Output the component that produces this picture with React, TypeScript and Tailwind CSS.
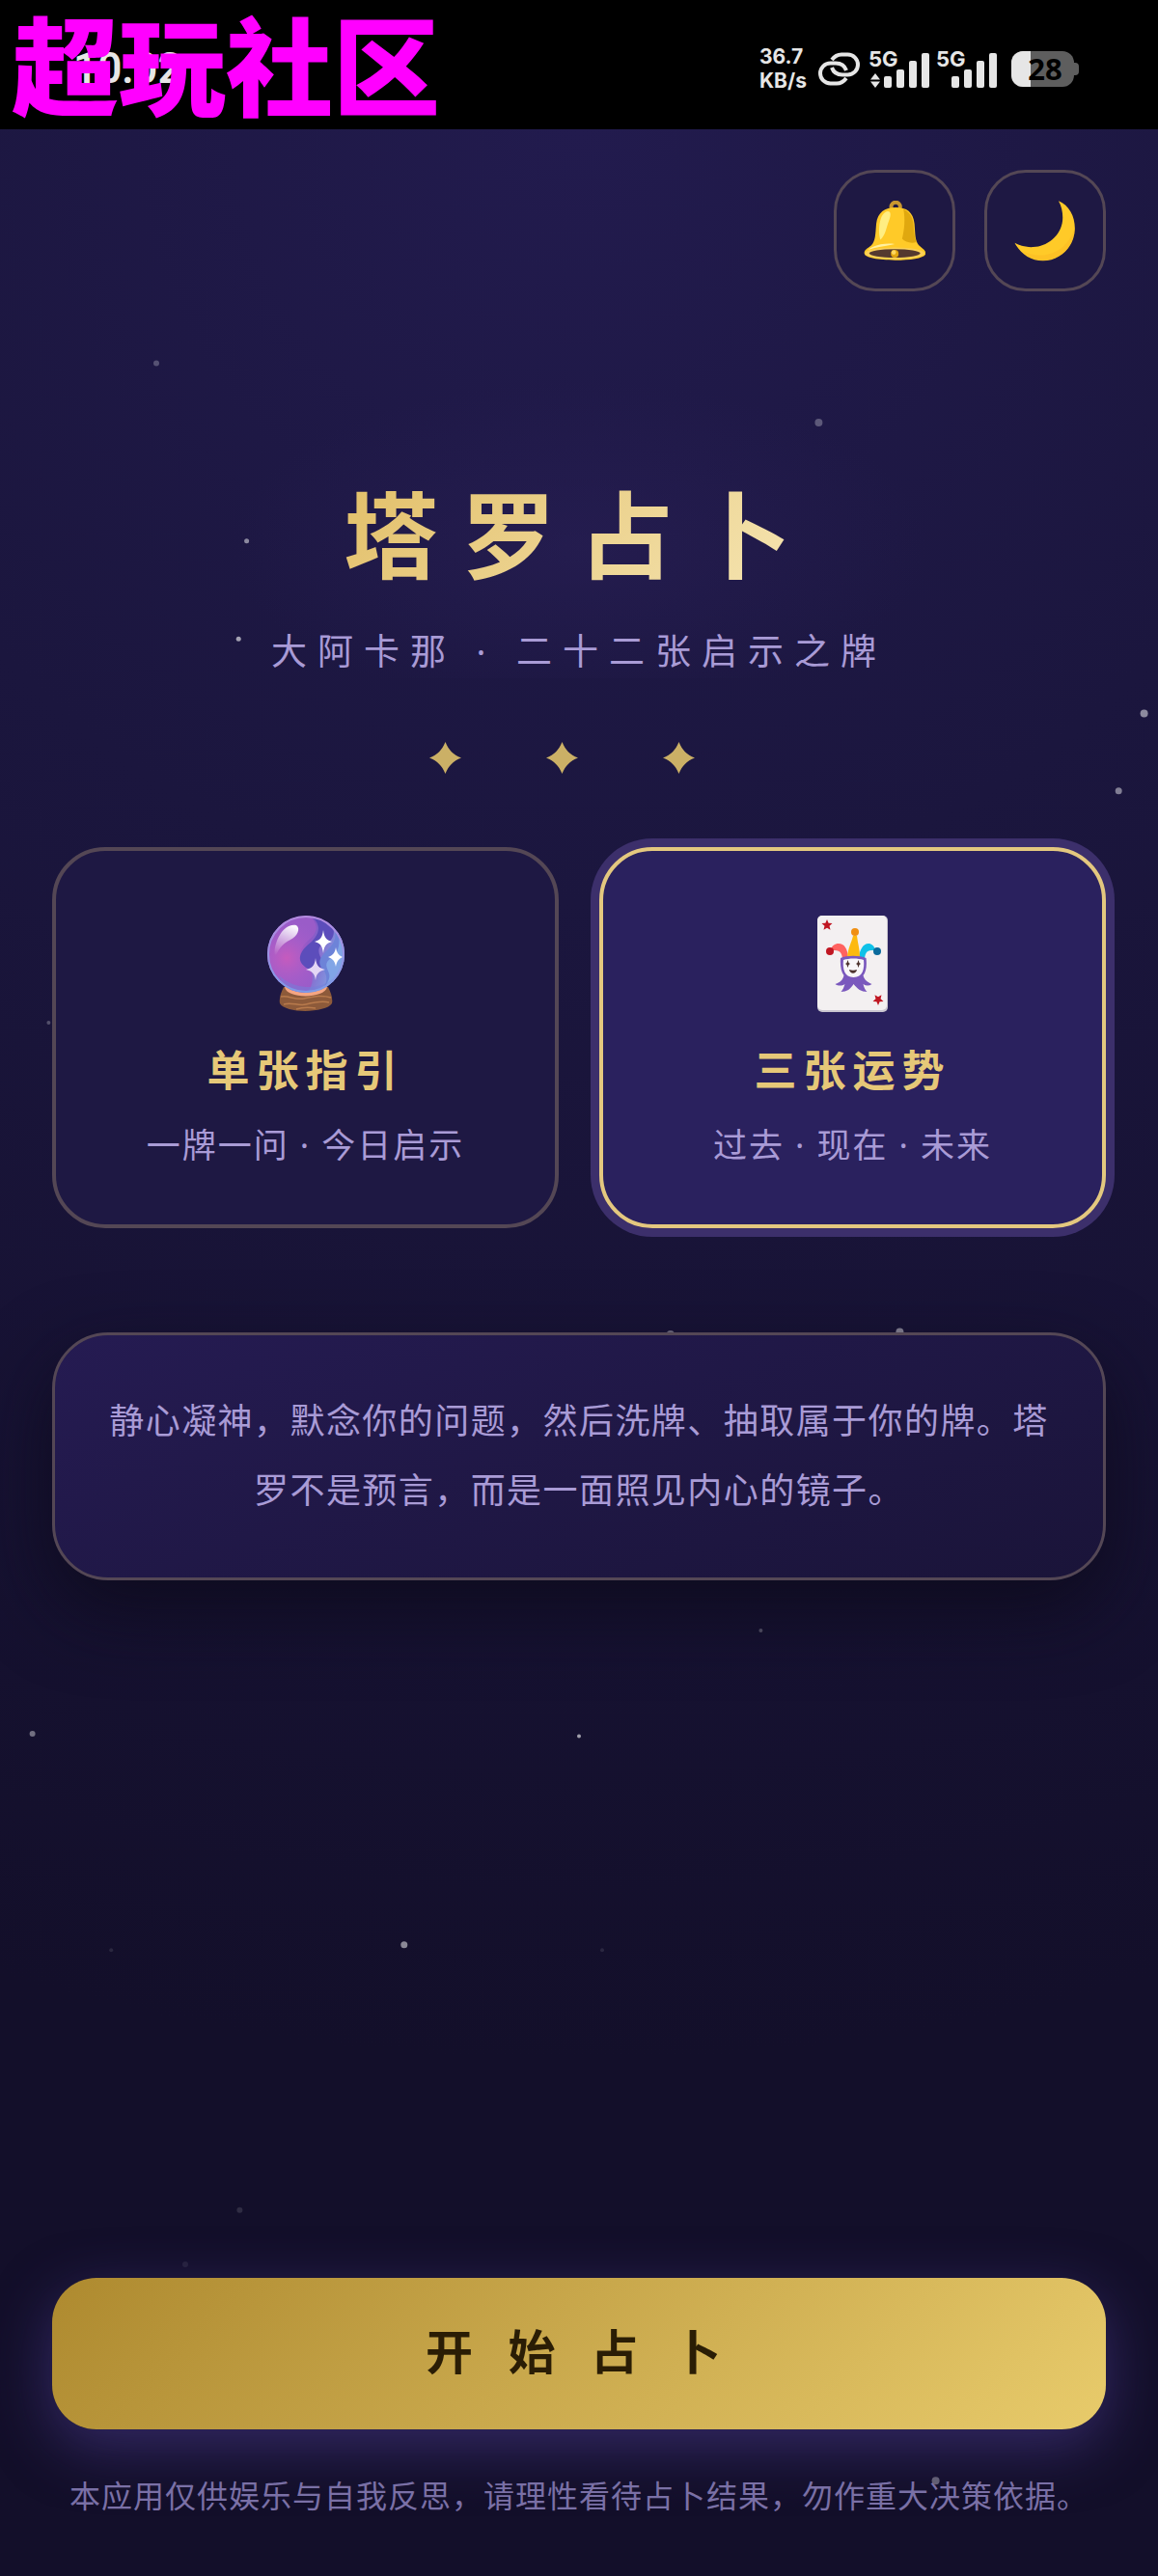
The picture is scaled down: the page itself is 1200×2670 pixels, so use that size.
import { useState } from "react";
import type { ReactNode } from "react";
import clsx from "clsx";

// cx / cy are percentages of the page, r is in pixels
const stars = [
  { cx: 13.5, cy: 14.1, r: 3, opacity: 0.25 },
  { cx: 70.7, cy: 16.4, r: 4, opacity: 0.28 },
  { cx: 21.3, cy: 21, r: 2.5, opacity: 0.5 },
  { cx: 20.6, cy: 24.8, r: 2.5, opacity: 0.6 },
  { cx: 98.8, cy: 27.7, r: 4, opacity: 0.5 },
  { cx: 96.6, cy: 30.7, r: 3.5, opacity: 0.45 },
  { cx: 4.2, cy: 39.7, r: 2, opacity: 0.25 },
  { cx: 57.9, cy: 51.8, r: 4, opacity: 0.4 },
  { cx: 77.7, cy: 51.7, r: 4, opacity: 0.5 },
  { cx: 65.7, cy: 63.3, r: 2, opacity: 0.3 },
  { cx: 2.8, cy: 67.3, r: 3, opacity: 0.4 },
  { cx: 50, cy: 67.4, r: 2, opacity: 0.6 },
  { cx: 34.9, cy: 75.5, r: 3.5, opacity: 0.5 },
  { cx: 9.6, cy: 75.7, r: 2, opacity: 0.1 },
  { cx: 52, cy: 75.7, r: 2, opacity: 0.1 },
  { cx: 20.7, cy: 85.8, r: 3, opacity: 0.12 },
  { cx: 16, cy: 87.9, r: 3, opacity: 0.08 },
  { cx: 80.8, cy: 96.3, r: 4, opacity: 0.35 },
];

const StarField = () => (
  <svg className="absolute inset-0 w-full h-full" aria-hidden="true">
    {stars.map((star, i) => (
      <circle
        key={i}
        cx={`${star.cx}%`}
        cy={`${star.cy}%`}
        r={star.r}
        fill="#fff"
        opacity={star.opacity}
      />
    ))}
  </svg>
);

const LinkIcon = () => (
  <svg width="45" height="35" viewBox="0 0 45 35" fill="none" stroke="#e6e6e6" strokeWidth="4">
    <path d="M15 8C18 4 21 2.500 25 2.500h6.500a10.500 10.500 0 0 1 0 21H26c-6 0-9.500-3-11-7.500" />
    <path d="M30 27c-3 4-6 5.500-10 5.500h-6.500a10.500 10.500 0 0 1 0-21H19c6 0 9.500 3 11 7.500" />
  </svg>
);

const Signal = ({ arrows = false }: { arrows?: boolean }) => (
  <div className="flex flex-col w-16 h-10 relative">
    <span className="text-[22px] leading-5 font-bold">5G</span>
    <svg className="absolute inset-0" width="64" height="40" viewBox="0 0 64 40" fill="#e6e6e6">
      {arrows && <path d="M2 31.500 7 25l5 6.500zM2 33.500 7 40l5-6.500z" />}
      <rect x="16" y="28" width="8" height="12" rx="2" />
      <rect x="29" y="21" width="8" height="19" rx="2" />
      <rect x="42" y="12" width="8" height="28" rx="2" />
      <rect x="55" y="4" width="8" height="36" rx="2" />
    </svg>
  </div>
);

const Battery = () => (
  <div className="relative w-[70px] h-[37px]">
    <svg width="70" height="37" viewBox="0 0 70 37">
      <defs>
        <clipPath id="cell">
          <rect width="65" height="37" rx="12" />
        </clipPath>
      </defs>
      <path d="M64 12h2a4 4 0 0 1 4 4v5a4 4 0 0 1-4 4h-2z" fill="#5e5e5e" />
      <g clipPath="url(#cell)">
        <rect width="65" height="37" fill="#5e5e5e" />
        <rect width="20" height="37" fill="#e6e6e6" />
      </g>
    </svg>
    <span className="absolute inset-0 flex items-center justify-center text-black text-[31px] leading-none font-bold font-['Open_Sans',sans-serif]">
      28
    </span>
  </div>
);

const StatusBar = () => (
  <div className="relative h-[134px] bg-black text-[#e6e6e6] flex items-center justify-between pl-[76px] pr-[82px] pt-2 font-['Inter',sans-serif]">
    <span className="text-[44px] leading-none font-semibold font-['Roboto',sans-serif]">10:02</span>
    <div className="flex items-center">
      <div className="text-[21px] leading-[25px] font-bold mr-3 w-12">
        <div>36.7</div>
        <div>KB/s</div>
      </div>
      <LinkIcon />
      <div className="flex gap-[6px] ml-2 mr-[14px]">
        <Signal arrows />
        <Signal />
      </div>
      <Battery />
    </div>
    <span className="absolute left-3 top-0 text-[111px] leading-[138px] font-black text-[#ff00ff] whitespace-nowrap font-['Noto_Sans','Noto_Sans_CJK_SC',sans-serif]">
      超玩社区
    </span>
  </div>
);

const BellIcon = () => (
  <svg width="64" height="62" viewBox="164 179 191 185">
    <circle cx="263" cy="198" r="14" fill="none" stroke="#c9972f" strokeWidth="12" />
    <path
      d="M263 200c-34 0-56 16-60 50-3 34-2 54-16 68-11 9-22 14-21 24 1 14 44 21 95 21s94-7 95-21c0-11-14-17-22-26-12-15-10-33-13-66-4-36-24-50-58-50z"
      fill="#ffca28"
    />
    <path d="M287 205c25 12 30 30 32 60 1 18 3 28 8 42-16 6-34 0-44-10 7-30 10-60 4-92z" fill="#e0a80f" />
    <path d="M238 212c12 0 10 14 4 30-8 20-10 44-26 58-8-20-6-84 22-88z" fill="#ffee82" />
    <path d="M178 331c20-18 60-22 82-18-20 6-55 8-82 18z" fill="#fff0a0" />
    <ellipse cx="260" cy="342" rx="92" ry="18" fill="#fbd057" />
    <ellipse cx="260" cy="342" rx="79" ry="13" fill="#55392f" />
    <circle cx="260" cy="343" r="12" fill="#e2a610" />
    <circle cx="257" cy="339" r="7" fill="#ffd75e" />
  </svg>
);

const MoonIcon = () => (
  <svg width="64" height="63" viewBox="632 178 192 190">
    <path
      d="M770 179c34 14 52 50 51 88-2 56-46 99-100 99-38 0-70-22-88-56 20 10 40 14 58 13 50-2 92-42 92-92 0-18-4-36-13-52z"
      fill="#ffca28"
    />
    <path
      d="M821 262c0 60-46 102-98 103-26 0-50-12-66-30 60 32 140 8 164-73z"
      fill="#f9b420"
      opacity="0.4"
    />
  </svg>
);

const CrystalBall = () => (
  <svg width="80" height="100" viewBox="0 0 80 100">
    <defs>
      <linearGradient id="glass" x1="0" y1="0.3" x2="1" y2="0.6">
        <stop offset="0" stopColor="#a066cc" />
        <stop offset="0.5" stopColor="#8656c4" />
        <stop offset="1" stopColor="#7fa9e8" />
      </linearGradient>
      <radialGradient id="pink" cx="0.25" cy="0.55" r="0.5">
        <stop offset="0" stopColor="#c65bbd" />
        <stop offset="1" stopColor="#a35fd0" stopOpacity="0" />
      </radialGradient>
      <linearGradient id="shine" x1="0.6" y1="0" x2="0.3" y2="1">
        <stop offset="0" stopColor="#fff" stopOpacity="0.95" />
        <stop offset="1" stopColor="#fff" stopOpacity="0" />
      </linearGradient>
      <linearGradient id="rim" x1="0" y1="0" x2="0" y2="1">
        <stop offset="0" stopColor="#b48be0" />
        <stop offset="1" stopColor="#7d9be6" />
      </linearGradient>
      <clipPath id="ball">
        <circle cx="40" cy="40" r="40" />
      </clipPath>
    </defs>
    <path d="M17 74h46c3 6 5 12 4 17-6 10-48 11-54 0-1-5 1-11 4-17z" fill="#8d5a3a" />
    <path
      d="M14 84c8-2 14 4 24 2s18-4 28-1M17 92c8-3 15 2 23 0s16-4 24-2M30 97c6-2 14-2 20-1"
      fill="none"
      stroke="#b87a4c"
      strokeWidth="1.5"
    />
    <path d="M18 74h44c-2 12-42 13-44 0z" fill="#f5a682" />
    <g clipPath="url(#ball)">
      <circle cx="40" cy="40" r="40" fill="url(#glass)" />
      <path d="M44 0c12 12 6 20-3 27-8 8-10 16-2 24 10 6 10 20 2 29h-20C-8 68-8 20 18 6z" fill="#9a5cc8" />
      <circle cx="40" cy="40" r="40" fill="url(#pink)" />
      <path d="M46 1c12 10 6 20 0 26-12 9-18 20-4 28 10 5 18-2 14-10s-4-14 4-16 12-12 6-22z" fill="#5c4dbb" />
      <path d="M66 8c8 10 4 20-2 26-8 8-14 14-6 22 6 8 4 18-6 24h28V10z" fill="#6d83d8" />
      <path d="M74 20c2 12-2 20-8 24-8 6-4 10-2 16s-4 14-10 20l26-8V20z" fill="#86aeea" opacity="0.8" />
      <path d="M12 62c14 14 44 18 60 0l-10 18H20z" fill="#7280dc" opacity="0.5" />
    </g>
    <circle cx="40" cy="40" r="39" fill="none" stroke="url(#rim)" strokeWidth="2" />
    <path d="M30 10c5 3 1 12-6 15-9 4-14 12-16 19-3-14 8-37 22-34z" fill="url(#shine)" />
    <path d="M58 15c1 8 3 10 9 12-6 2-8 4-9 12-1-8-3-10-9-12 6-2 8-4 9-12z" fill="#fff" />
    <path d="M71 33c1 6 3 8 7 10-4 2-6 4-7 10-1-6-3-8-8-10 5-2 7-4 8-10z" fill="#fff" />
    <path d="M50 44c1 8 3 10 10 12-7 2-9 4-10 11-1-7-3-9-10-11 7-2 9-4 10-12z" fill="#e4d6f5" />
  </svg>
);

const JokerCard = () => (
  <svg width="73" height="100" viewBox="0 0 73 100">
    <rect width="73" height="100" rx="5" fill="#c9c5cf" />
    <rect width="72" height="98" rx="5" fill="#f3f0f1" />
    <path
      d="m10 4 1.600 3.700 3.900.3-3 2.700 1 4.100L10 12.700l-3.500 2.100 1-4.100-3-2.700 3.900-.3z"
      fill="#c01622"
    />
    <path
      d="m63 93-1.600-3.700-3.900-.3 3-2.700-1-4.100 3.500 2.100 3.500-2.100-1 4.100 3 2.700-3.900.3z"
      fill="#c01622"
    />
    <path d="M26 46c0-6-2-10-8-10h-4c1-5 4-7 8-7 6 0 9 5 10 14z" fill="#ff6260" />
    <path d="M49 46c0-6 2-10 7-10h4c-1-5-4-7-7-7-6 0-9 7-10 14z" fill="#0fc1e8" />
    <path d="M31 43c1-10 4-14 6-22h4c1 8 3 14 3 22z" fill="#fdb90f" />
    <circle cx="39" cy="17" r="4" fill="#f08f13" />
    <circle cx="13" cy="37" r="4" fill="#c01622" />
    <circle cx="62" cy="37" r="4" fill="#0b6a9c" />
    <path
      d="M24 44c6-3 20-3 26.500 0 1 8 0 14-3 18 1 5 5 7 9 9-3 2-6 2-9 0 1 4 2 6 4 8-6 0-10-3-14-8-3 5-7 8-13 8 2-2 3-5 4-8-3 2-7 2-10 0 5-2 8-4 9-9-3-4-4-10-3.500-18z"
      fill="#7a58bd"
    />
    <path d="M27 46c6-2 15-2 21 0 1 9-1 18-10.500 18S26 55 27 46z" fill="#f8f6f8" />
    <path
      d="m31.500 46 1 3 1.500 1-1.500 1-1 3-1-3-1.500-1 1.500-1zM42.500 46l1 3 1.500 1-1.500 1-1 3-1-3-1.500-1 1.500-1zM33 56c3 1 5 1 8 0-1 5-7 5-8 0z"
      fill="#4b312c"
    />
  </svg>
);

const Sparkle = () => (
  <svg width="33" height="33" viewBox="0 0 33 33" fill="#cbb066">
    <path d="M16.500 0C20 8.500 24.500 13 33 16.500 24.500 20 20 24.500 16.500 33 13 24.500 8.500 20 0 16.500 8.500 13 13 8.500 16.500 0z" />
  </svg>
);

const IconButton = ({ label, children }: { label: string; children: ReactNode }) => (
  <button
    type="button"
    aria-label={label}
    className="w-[126px] h-[126px] rounded-[43px] border-3 border-[#544755] bg-[#1e1843] flex items-center justify-center"
  >
    {children}
  </button>
);

type ModeCardProps = {
  title: string;
  subtitle: string;
  selected: boolean;
  onSelect: () => void;
  children: ReactNode;
};

const ModeCard = ({ title, subtitle, selected, onSelect, children }: ModeCardProps) => (
  <button
    type="button"
    aria-pressed={selected}
    onClick={onSelect}
    className={clsx(
      "flex flex-col items-center rounded-[55px] border-4 pt-[67px] pb-[58px]",
      selected
        ? "border-[#e4c87f] bg-[#2a215e] ring-9 ring-[#3c2f6b]"
        : "border-[#544755] bg-[#1e1843]"
    )}
  >
    {children}
    <span className="mt-[30px] text-[44px] leading-[60px] tracking-[7px] font-bold text-[#e6c878]">
      {title}
    </span>
    <span className="mt-6 text-[35px] leading-[48px] tracking-[2px] text-[#a99bd6]">{subtitle}</span>
  </button>
);

export default function App() {
  const [mode, setMode] = useState("three");

  return (
    <div
      lang="zh-CN"
      className="relative min-h-screen flex flex-col overflow-hidden bg-[#130f2a] bg-[radial-gradient(ellipse_170%_75%_at_50%_5%,#221b4e_0%,#1b163e_40%,#130f2a_100%)] font-['Noto_Sans','Noto_Sans_CJK_SC',sans-serif]"
    >
      <StarField />
      <StatusBar />

      <main className="relative flex-1 flex flex-col px-[54px] pt-[42px] pb-[59px]">
        <div className="flex justify-end gap-[30px]">
          <IconButton label="通知">
            <BellIcon />
          </IconButton>
          <IconButton label="夜间模式">
            <MoonIcon />
          </IconButton>
        </div>

        <header className="flex flex-col items-center pt-[193px] bg-[radial-gradient(ellipse_360px_170px_at_50%_66%,#2a205880,transparent)]">
          <h1 className="text-[98px] leading-[118px] tracking-[24px] font-bold bg-linear-135 from-[#e2bf68] to-[#f6e6b4] bg-clip-text text-transparent">
            塔罗占卜
          </h1>
          <p className="mt-[34px] text-[37px] leading-[56px] tracking-[11px] text-[#a99bd6]">
            大阿卡那 · 二十二张启示之牌
          </p>
        </header>

        <div className="flex justify-center gap-[88px] mt-[66px] mr-9">
          <Sparkle />
          <Sparkle />
          <Sparkle />
        </div>

        <div className="grid grid-cols-2 gap-[42px] mt-[76px]">
          <ModeCard
            title="单张指引"
            subtitle="一牌一问 · 今日启示"
            selected={mode === "single"}
            onSelect={() => setMode("single")}
          >
            <CrystalBall />
          </ModeCard>
          <ModeCard
            title="三张运势"
            subtitle="过去 · 现在 · 未来"
            selected={mode === "three"}
            onSelect={() => setMode("three")}
          >
            <JokerCard />
          </ModeCard>
        </div>

        <p className="mt-[108px] rounded-[58px] border-3 border-[#544755] bg-linear-160 from-[#251b52] to-[#1a1439] px-[52px] pt-[53px] pb-[54px] text-center text-[36px] leading-[72px] tracking-[0.04em] text-[#a99bd6] shadow-[0_30px_80px_#0c0a1acc]">
          静心凝神，默念你的问题，然后洗牌、抽取属于你的牌。塔罗不是预言，而是一面照见内心的镜子。
        </p>

        <div className="mt-auto flex flex-col">
          <button
            type="button"
            className="h-[157px] rounded-[46px] bg-linear-135 from-[#ae8a2f] to-[#e8cb6b] pb-1 text-[49px] leading-none tracking-[12px] font-bold text-[#2a1d05] shadow-[0_18px_60px_#4a3a8c99]"
          >
            开 始 占 卜
          </button>
          <p className="mt-[45px] text-center text-[32px] leading-[48px] tracking-[1px] text-[#7a70a6]">
            本应用仅供娱乐与自我反思，请理性看待占卜结果，勿作重大决策依据。
          </p>
        </div>
      </main>
    </div>
  );
}
